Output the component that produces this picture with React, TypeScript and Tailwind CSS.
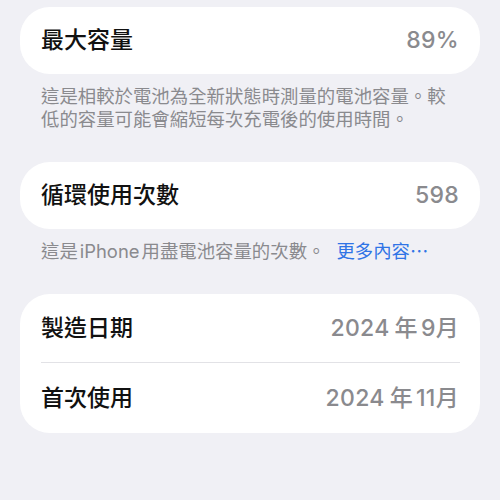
const FONT = "font-['Inter','Noto_Sans_CJK_TC',sans-serif]";

function Row({ label, value }: { label: string; value: React.ReactNode }) {
  return (
    <div className="flex h-full items-center justify-between">
      <span className="text-[23px] font-medium text-[#111]">{label}</span>
      <span className="text-[23px] font-medium tracking-[0.3px] text-[#8a8a8e]">{value}</span>
    </div>
  );
}

function DateValue({ year, month }: { year: string; month: string }) {
  return (
    <span className="flex items-baseline">
      <span>{year}</span>
      <span className="ml-[5px]">年</span>
      <span className="ml-[3px]">{month}</span>
      <span>月</span>
    </span>
  );
}

export default function App() {
  return (
    <div className={`h-[500px] w-[500px] overflow-hidden bg-[#f0f0f5] px-[20px] pt-[7px] ${FONT}`}>
      <div className="h-[67px] rounded-[30px] bg-white px-[21px]">
        <Row label="最大容量" value="89%" />
      </div>
      <p className="mt-[11px] px-[21px] text-[18.4px] leading-[23px] text-[#8a8a8e]">
        這是相較於電池為全新狀態時測量的電池容量。較低的容量可能會縮短每次充電後的使用時間。
      </p>

      <div className="mt-[31px] h-[67px] rounded-[30px] bg-white px-[21px]">
        <Row label="循環使用次數" value="598" />
      </div>
      <p className="mt-[11px] px-[21px] text-[18.4px] leading-[23px] text-[#8a8a8e]">
        這是<span className="mx-[2px]">iPhone</span>用盡電池容量的次數。
        <span className="ml-[11px] text-[#2f74e6]">更多內容⋯</span>
      </p>

      <div className="mt-[31px] rounded-[30px] bg-white pl-[21px]">
        <div className="h-[68px] pr-[21px]">
          <Row label="製造日期" value={<DateValue year="2024" month="9" />} />
        </div>
        <div className="mr-[20px] h-px bg-[#e2e2e6]" />
        <div className="h-[70px] pr-[21px]">
          <Row label="首次使用" value={<DateValue year="2024" month="11" />} />
        </div>
      </div>
    </div>
  );
}
